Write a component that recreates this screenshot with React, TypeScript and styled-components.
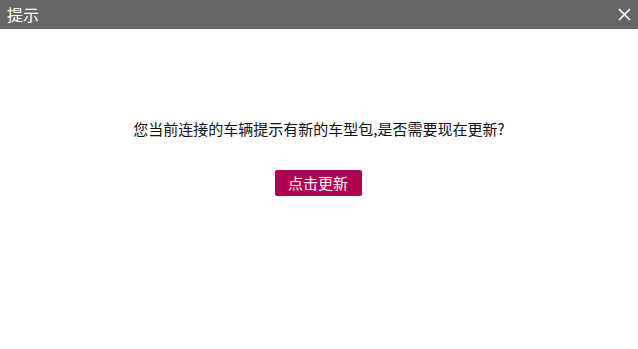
import React from "react";
import styled, { createGlobalStyle } from "styled-components";

const GlobalStyle = createGlobalStyle`
  html, body {
    margin: 0;
    padding: 0;
    background: #ffffff;
  }
  body {
    font-family: "Noto Sans CJK SC", "Microsoft YaHei", "Liberation Sans", sans-serif;
  }
`;

// 弹窗外框
const Dialog = styled.div`
  width: 638px;
  height: 349px;
  display: flex;
  flex-direction: column;
  background: #ffffff;
`;

// 标题栏
const Header = styled.div`
  height: 29px;
  background: #666666;
  display: flex;
  align-items: center;
  justify-content: space-between;
  padding: 0 7px;
  box-sizing: border-box;
`;

const Title = styled.span`
  color: #ffffff;
  font-size: 16px;
  line-height: 29px;
`;

const CloseButton = styled.button`
  width: 14px;
  height: 14px;
  padding: 0;
  border: none;
  background: transparent;
  cursor: pointer;
  display: flex;
  align-items: center;
  justify-content: center;
`;

// 内容区
const Body = styled.div`
  flex: 1;
  display: flex;
  flex-direction: column;
  align-items: center;
  padding-top: 90px;
`;

const Message = styled.p`
  margin: 0;
  font-size: 15px;
  line-height: 20px;
  color: #111111;
`;

const UpdateButton = styled.button`
  margin-top: 31px;
  margin-right: 2px;
  width: 87px;
  height: 26px;
  border: none;
  border-radius: 2px;
  background: #b0004f;
  color: #ffffff;
  font-family: inherit;
  font-size: 15px;
  line-height: 26px;
  padding: 0;
  cursor: pointer;
`;

const App: React.FC = () => {
  return (
    <>
      <GlobalStyle />
      <Dialog>
        <Header>
          <Title>提示</Title>
          <CloseButton aria-label="关闭">
            <svg width="13" height="13" viewBox="0 0 13 13">
              <path d="M1 1 L12 12 M12 1 L1 12" stroke="#ffffff" strokeWidth="1.6" />
            </svg>
          </CloseButton>
        </Header>
        <Body>
          <Message>您当前连接的车辆提示有新的车型包,是否需要现在更新?</Message>
          <UpdateButton>点击更新</UpdateButton>
        </Body>
      </Dialog>
    </>
  );
};

export default App;
